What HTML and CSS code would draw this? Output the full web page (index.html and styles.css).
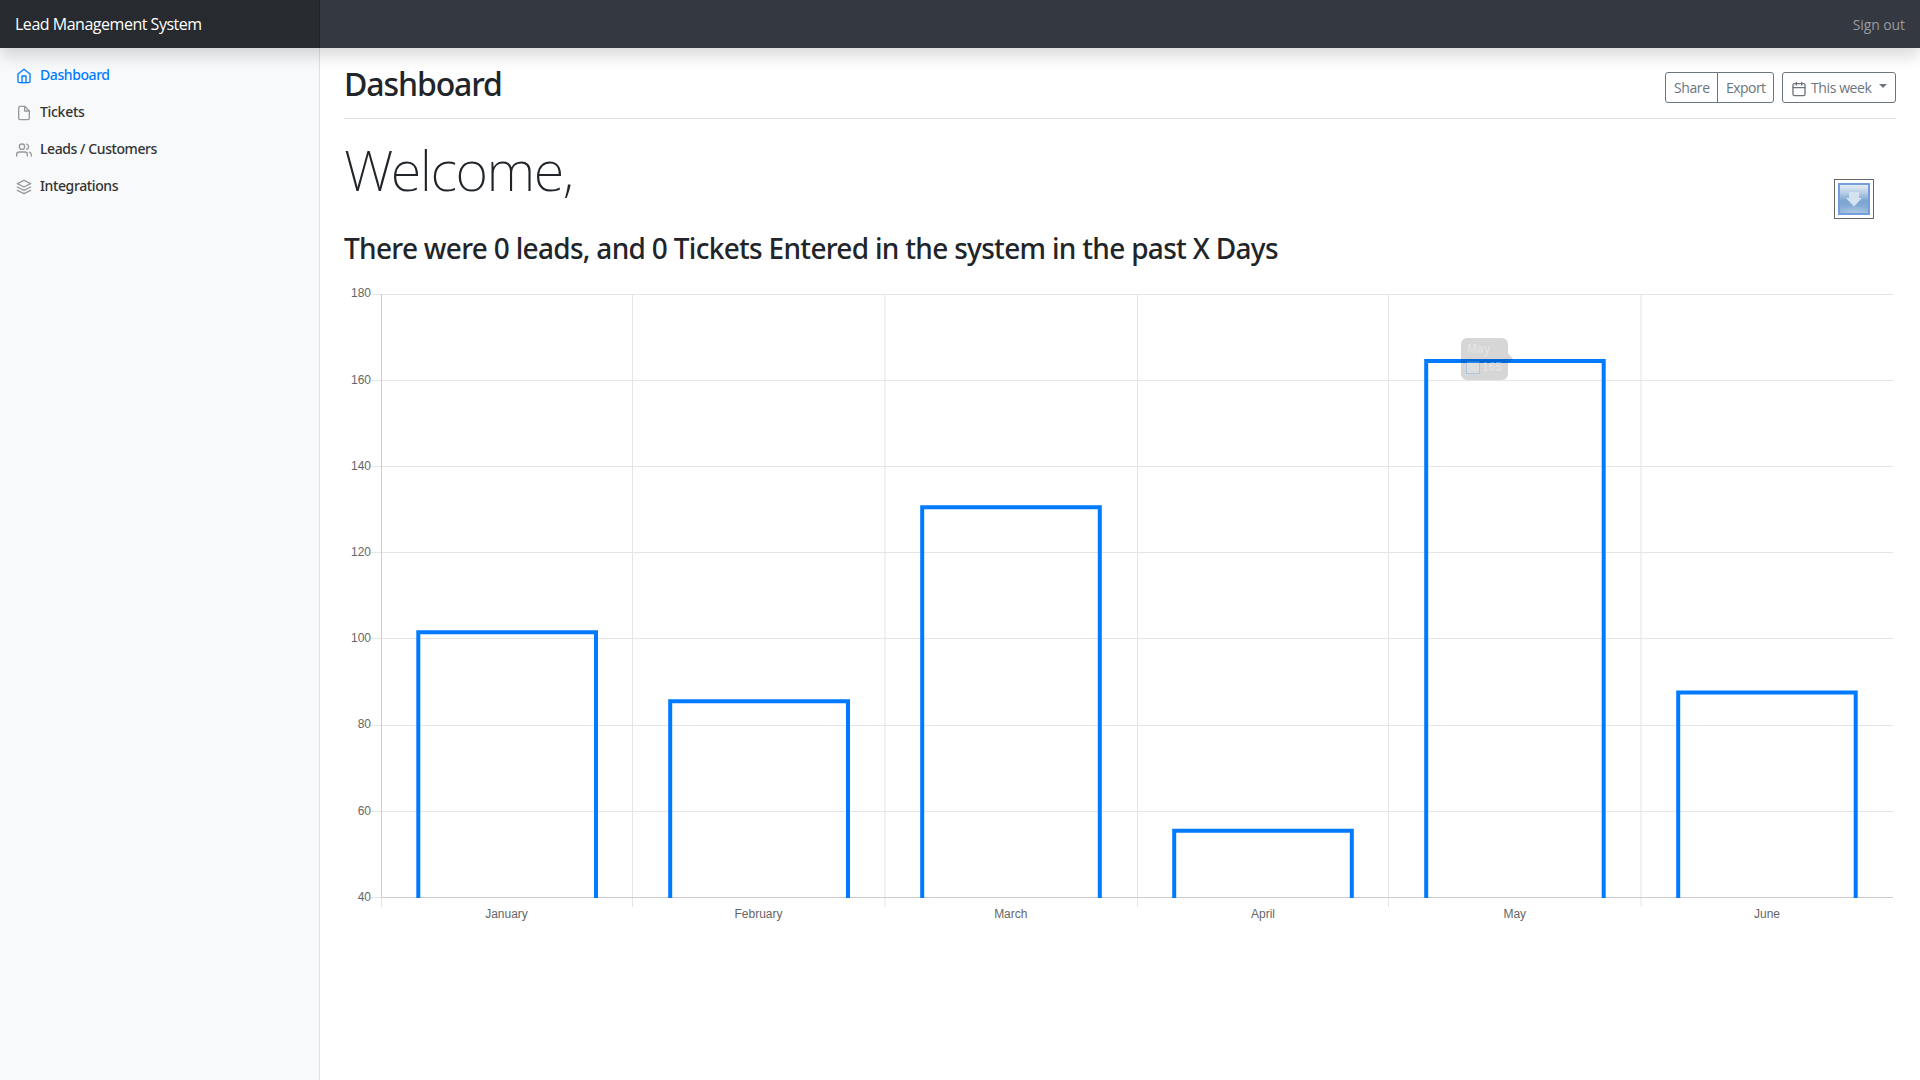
FILE: index.html
```
<!DOCTYPE html>
<html lang="en">
<head>
<meta charset="utf-8">
<title>Lead Management System</title>
<link rel="stylesheet" href="styles.css">
</head>
<body>
<header class="navbar">
  <a class="brand">Lead Management System</a>
  <a class="signout">Sign out</a>
</header>
<div class="layout">
  <nav class="sidebar">
    <a class="nav-link active"><svg class="icon" viewBox="0 0 24 24"><path d="M3 9l9-7 9 7v11a2 2 0 0 1-2 2H5a2 2 0 0 1-2-2z"/><path d="M9 22V12h6v10"/></svg><span>Dashboard</span></a>
    <a class="nav-link tickets"><svg class="icon" viewBox="0 0 24 24"><path d="M13 2H6a2 2 0 0 0-2 2v16a2 2 0 0 0 2 2h12a2 2 0 0 0 2-2V9z"/><path d="M13 2v7h7"/></svg><span>Tickets</span></a>
    <a class="nav-link"><svg class="icon" viewBox="0 0 24 24"><path d="M17 21v-2a4 4 0 0 0-4-4H5a4 4 0 0 0-4 4v2"/><circle cx="9" cy="7" r="4"/><path d="M23 21v-2a4 4 0 0 0-3-3.87M16 3.13a4 4 0 0 1 0 7.75"/></svg><span>Leads / Customers</span></a>
    <a class="nav-link integrations"><svg class="icon" viewBox="0 0 24 24"><path d="M12 2L2 7l10 5 10-5z"/><path d="M2 17l10 5 10-5M2 12l10 5 10-5"/></svg><span>Integrations</span></a>
  </nav>
  <main class="main">
    <div class="page-head">
      <h1 class="title">Dashboard</h1>
      <div class="toolbar">
        <div class="btn-group">
          <button class="btn share">Share</button>
          <button class="btn export">Export</button>
        </div>
        <button class="btn dropdown"><svg class="icon" viewBox="0 0 24 24"><rect x="3" y="4" width="18" height="18" rx="2"/><path d="M16 2v4M8 2v4M3 10h18"/></svg><span>This week</span><i class="caret"></i></button>
      </div>
    </div>
    <div class="welcome-row">
      <p class="welcome">Welcome,</p>
      <div class="download">
        <svg width="32" height="32" viewBox="0 0 32 32">
          <defs>
            <linearGradient id="sky" x1="0" y1="0" x2="0" y2="1"><stop offset="0" stop-color="#eff4fa"/><stop offset=".3" stop-color="#b9cfe6"/><stop offset=".56" stop-color="#7ba4d0"/><stop offset="1" stop-color="#96b8dc"/></linearGradient>
            <radialGradient id="glow" cx=".5" cy="1" r=".6"><stop offset="0" stop-color="#b4cbe6"/><stop offset="1" stop-color="#b4cbe6" stop-opacity="0"/></radialGradient>
          </defs>
          <rect width="32" height="32" fill="url(#sky)"/>
          <rect y="16" width="32" height="16" fill="url(#glow)"/>
          <rect x="1" y="1" width="30" height="30" fill="none" stroke="#749fdc" stroke-width="2"/>
          <path d="M11 9h10v6h3l-8 8.500L8 15h3z" fill="#d5e3f1"/>
        </svg>
      </div>
    </div>
    <h2 class="summary">There were 0 leads, and 0 Tickets Entered in the system in the past X Days</h2>
    <svg class="chart" width="1552" height="655" viewBox="344 280 1552 655">
      <g class="grid">
        <path d="M371 294.5H1893M371 380.5H1893M371 466.5H1893M371 552.5H1893M371 638.5H1893M371 725.5H1893M371 811.5H1893"/>
        <path d="M632.5 294V907M885 294V907M1137.5 294V907M1388.5 294V907M1641 294V907M381.5 898V907M371 897.5H381"/>
        <path class="axis" d="M381.5 294V897.5H1893"/>
      </g>
      <g class="bars">
        <path d="M418.3 898V632.3H596V898"/>
        <path d="M670.2 898V701.3H848V898"/>
        <path d="M922.2 898V507.3H1099.8V898"/>
        <path d="M1174.2 898V830.7H1351.8V898"/>
        <path d="M1426.2 898V361H1603.7V898"/>
        <path d="M1678.2 898V692.6H1855.7V898"/>
      </g>
      <g class="ticks" text-anchor="end">
        <text x="371" y="297">180</text><text x="371" y="384">160</text><text x="371" y="470">140</text><text x="371" y="556">120</text><text x="371" y="642">100</text><text x="371" y="728">80</text><text x="371" y="815">60</text><text x="371" y="901">40</text>
      </g>
      <g class="ticks" text-anchor="middle">
        <text x="506.5" y="918">January</text><text x="758.5" y="918">February</text><text x="1010.8" y="918">March</text><text x="1263" y="918">April</text><text x="1514.8" y="918">May</text><text x="1767" y="918">June</text>
      </g>
      <g class="tip">
        <path d="M1467 338H1502a6 6 0 0 1 6 6V353.500L1513 358.500 1508 363.500V374a6 6 0 0 1-6 6H1467a6 6 0 0 1-6-6V344a6 6 0 0 1 6-6z" fill="#000" fill-opacity=".16"/>
        <rect x="1466.5" y="361.5" width="13" height="12" fill="#fff" fill-opacity=".2" stroke="#007bff" stroke-opacity=".2"/>
        <text x="1467" y="353">May</text><text x="1482" y="371">165</text>
      </g>
    </svg>
  </main>
</div>
</body>
</html>
```
FILE: styles.css
```
* { box-sizing: border-box; }
body {
  margin: 0;
  height: 1080px;
  overflow: hidden;
  display: flex;
  flex-direction: column;
  background: #fff;
  color: #212529;
  font: 400 16px/1.5 "Open Sans", sans-serif;
}
.navbar {
  position: relative;
  z-index: 2;
  flex: none;
  display: flex;
  justify-content: space-between;
  height: 48px;
  background: #343840;
  box-shadow: 0 8px 16px rgba(0, 0, 0, .15);
}
.brand {
  width: 320px;
  padding: 12px 15px;
  background: #272b2f;
  border-right: 1px solid #202328;
  color: #fff;
  letter-spacing: -.48px;
}
.signout {
  padding: 14px 15px 0;
  color: #999b9f;
  font-size: 14px;
  line-height: 21px;
  letter-spacing: -.1px;
}
.layout { flex: 1; display: flex; }
.sidebar {
  width: 320px;
  flex: none;
  padding-top: 8px;
  background: #f8f9fb;
  border-right: 1px solid #dfe0e2;
}
.nav-link {
  display: flex;
  align-items: center;
  gap: 8px;
  height: 37px;
  padding: 0 16px;
  color: #333;
  font-family: "Noto Sans", sans-serif;
  font-size: 14px;
  font-weight: 500;
  letter-spacing: -.42px;
}
.tickets { letter-spacing: -.3px; }
.integrations { letter-spacing: -.38px; }
.nav-link.active { color: #007bff; }
.icon {
  flex: none;
  width: 16px;
  height: 16px;
  fill: none;
  stroke: #999;
  stroke-width: 2;
  stroke-linecap: round;
  stroke-linejoin: round;
}
.nav-link .icon { margin-top: 2px; }
.active .icon { stroke: #007bff; }
.main {
  flex: 1;
  padding: 16px 24px 0;
}
.page-head {
  display: flex;
  justify-content: space-between;
  align-items: center;
  height: 55px;
  padding-bottom: 8px;
  border-bottom: 1px solid #dee2e6;
}
.title {
  margin: -6px 0 0;
  font-family: "Noto Sans", sans-serif;
  font-size: 32px;
  font-weight: 500;
  line-height: 38px;
  letter-spacing: -1.1px;
}
.toolbar { display: flex; gap: 8px; }
.btn-group { display: flex; }
.btn {
  display: flex;
  align-items: center;
  height: 31px;
  padding: 0 8px;
  border: 1px solid #6c757d;
  border-radius: 3px;
  background: none;
  color: #6c757d;
  font: 400 14px/21px "Open Sans", sans-serif;
  letter-spacing: -.4px;
  white-space: nowrap;
}
.share { width: 53px; border-radius: 3px 0 0 3px; }
.export { width: 57px; margin-left: -1px; border-radius: 0 3px 3px 0; letter-spacing: -.55px; }
.dropdown { width: 114px; padding-right: 0; }
.dropdown .icon { margin: 3px 4px 0 0; stroke: #6c757d; }
.caret {
  margin: -3px 0 0 8px;
  border: 4px solid transparent;
  border-top-color: #6c757d;
  border-bottom: 0;
}
.welcome-row {
  display: flex;
  justify-content: space-between;
  height: 106px;
  padding-right: 22px;
}
.welcome {
  margin: 17px 0 0;
  font: 200 56px/67px "Noto Sans", sans-serif;
  letter-spacing: -1.5px;
}
.download {
  width: 40px;
  height: 40px;
  margin-top: 60px;
  padding: 3px;
  border: 1px solid #666;
}
.download svg { display: block; }
.summary {
  height: 55px;
  margin: 0;
  padding-top: 6px;
  font-family: "Noto Sans", sans-serif;
  font-size: 28px;
  font-weight: 500;
  line-height: 34px;
  letter-spacing: -.69px;
}
.chart { display: block; }
.grid path { fill: none; stroke: #e5e5e5; }
.grid .axis { stroke: #ccc; }
.bars path { fill: none; stroke: #007bff; stroke-width: 4; }
.ticks text { font: 12px "Liberation Sans", Arial, sans-serif; fill: #666; }
.tip text { font: bold 12px "Liberation Sans", Arial, sans-serif; fill: #fff; fill-opacity: .3; }
```
